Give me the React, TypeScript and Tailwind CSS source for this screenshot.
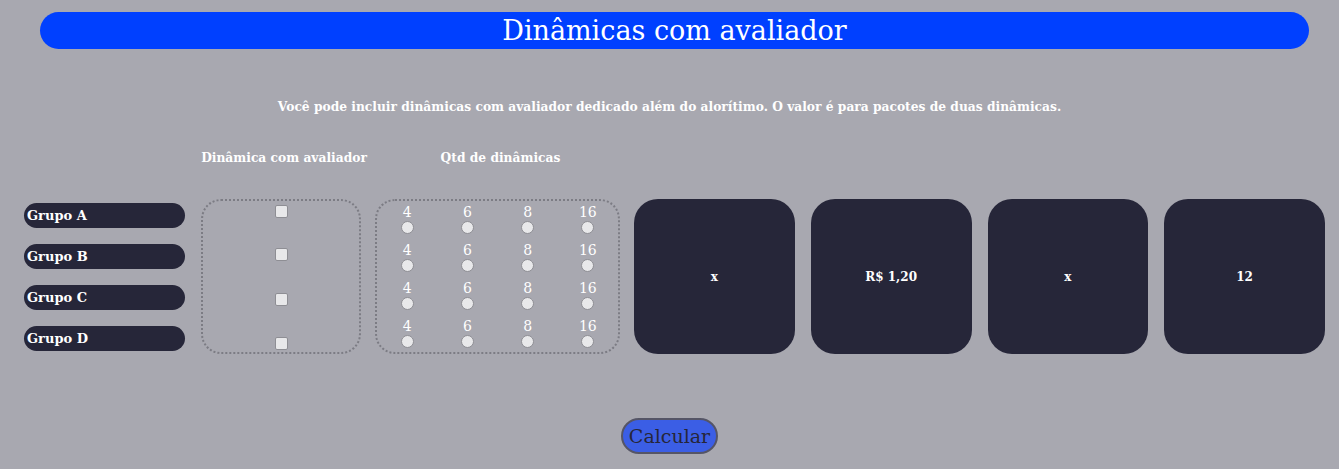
import React, { useState } from 'react';

const grupos = ['Grupo A', 'Grupo B', 'Grupo C', 'Grupo D'];
const qtds = ['4', '6', '8', '16'];
const resultados = ['x', 'R$ 1,20', 'x', '12'];

const serif = "font-['DejaVu_Serif',_'Liberation_Serif',_serif]";

export default function App() {
  const [checked, setChecked] = useState<boolean[]>([false, false, false, false]);
  const [qtd, setQtd] = useState<(string | null)[]>([null, null, null, null]);

  const toggle = (i: number) => {
    setChecked((prev) => prev.map((v, j) => (j === i ? !v : v)));
  };

  const checkMargins = ['mt-0', 'mt-[30px]', 'mt-[32px]', 'mt-[31px]'];

  return (
    <div className={`min-h-[469px] w-full bg-[#a8a8b0] ${serif} text-white`}>
      {/* Header */}
      <div className="pl-[40px] pr-[30px] pt-[12px]">
        <h1 className="flex h-[37px] items-center justify-center rounded-full bg-[#0040ff] text-[27px] leading-none">
          Dinâmicas com avaliador
        </h1>
      </div>

      <p className="mt-[48px] text-center text-[12.25px] font-bold leading-[20px]">
        Você pode incluir dinâmicas com avaliador dedicado além do alorítimo. O valor é para pacotes de duas dinâmicas.
      </p>

      {/* Column headers */}
      <div className="mt-[32px] flex whitespace-nowrap text-[12.25px] font-bold leading-[18px]">
        <div className="ml-[196px] w-[176px] text-center">Dinâmica com avaliador</div>
        <div className="ml-[6px] w-[245px] text-center">Qtd de dinâmicas</div>
      </div>

      {/* Main row */}
      <div className="mt-[32px] flex items-start pr-[14px]">
        {/* Group labels */}
        <div className="ml-[24px] flex w-[161px] shrink-0 flex-col gap-[16px] pt-[4px]">
          {grupos.map((g) => (
            <div
              key={g}
              className="flex h-[25px] items-center rounded-full bg-[#262639] pl-[3px] text-[13px] font-bold"
            >
              {g}
            </div>
          ))}
        </div>

        {/* Checkboxes */}
        <div className="ml-[16px] flex h-[155px] w-[160px] shrink-0 flex-col items-center rounded-[20px] border-2 border-dotted border-[#7c7c84] pt-[4px]">
          {grupos.map((g, i) => (
            <button
              key={g}
              type="button"
              onClick={() => toggle(i)}
              className={`h-[13px] w-[13px] rounded-[2px] border border-[#8e8e94] ${checked[i] ? 'bg-[#3b5ee5]' : 'bg-[#e8e8ea]'} ${checkMargins[i]}`}
              aria-label={`Dinâmica com avaliador ${g}`}
            />
          ))}
        </div>

        {/* Radios */}
        <div className="ml-[14px] flex h-[155px] w-[245px] shrink-0 flex-col rounded-[20px] border-2 border-dotted border-[#7c7c84] pt-[3px]">
          {grupos.map((g, i) => (
            <div key={g} className="grid grid-cols-4 text-[14px] leading-[17px]">
              {qtds.map((q) => (
                <label key={q} className="flex cursor-pointer flex-col items-center">
                  <span>{q}</span>
                  <button
                    type="button"
                    onClick={() => setQtd((prev) => prev.map((v, j) => (j === i ? q : v)))}
                    className="mb-[8px] flex h-[13px] w-[13px] items-center justify-center rounded-full border border-[#8e8e94] bg-[#e8e8ea]"
                    aria-label={`${g} ${q}`}
                  >
                    {qtd[i] === q && <span className="h-[7px] w-[7px] rounded-full bg-[#3b5ee5]" />}
                  </button>
                </label>
              ))}
            </div>
          ))}
        </div>

        {/* Result cards */}
        <div className="ml-[14px] flex flex-1 gap-[16px]">
          {resultados.map((r, i) => (
            <div
              key={i}
              className="flex h-[155px] flex-1 items-center justify-center rounded-[24px] bg-[#262639] text-[12px] font-bold"
            >
              {r}
            </div>
          ))}
        </div>
      </div>

      <div className="mt-[64px] flex justify-center">
        <button
          type="button"
          className="h-[36px] rounded-full border-2 border-[#555566] bg-[#3b5ee5] px-[6px] text-[19px] leading-none text-[#262639]"
        >
          Calcular
        </button>
      </div>
    </div>
  );
}
